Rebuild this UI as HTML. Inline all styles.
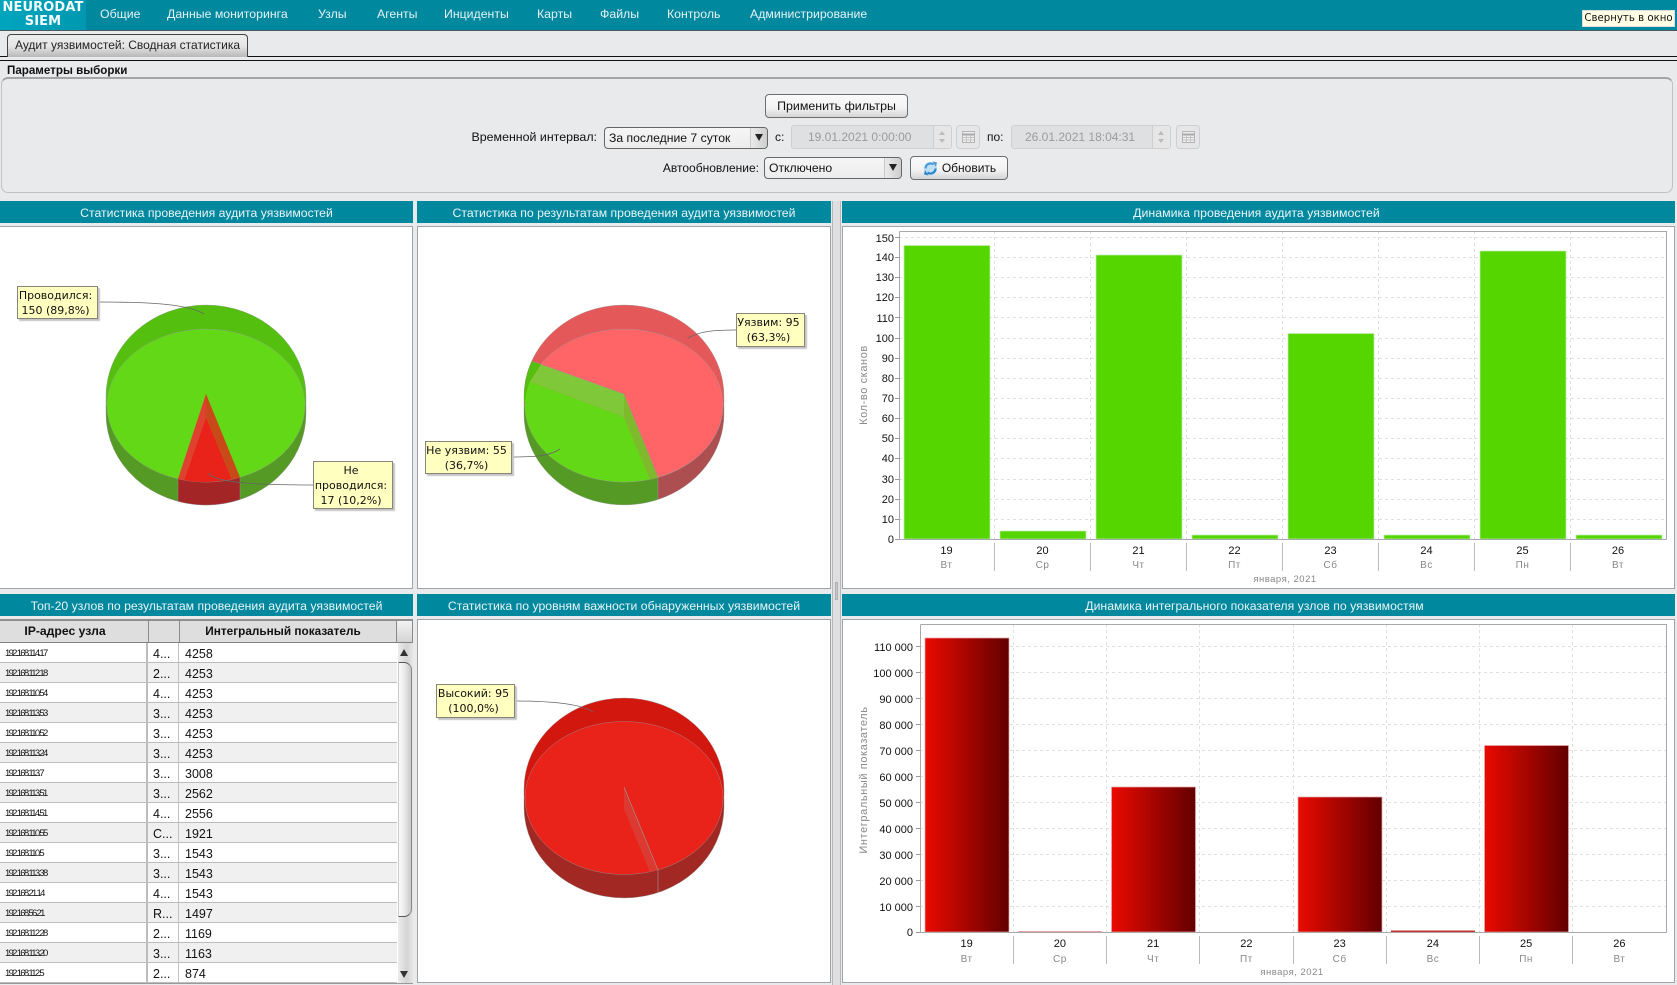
<!DOCTYPE html>
<html lang="ru"><head><meta charset="utf-8"><title>Аудит уязвимостей</title>
<style>
html,body{margin:0;padding:0}
body{width:1677px;height:985px;position:relative;overflow:hidden;background:#e9eaec;font-family:"Liberation Sans",sans-serif;color:#111;font-size:12px}
.a{position:absolute;white-space:nowrap}
.m{position:absolute;top:6px;color:#e6f3f5;font-size:12.3px;line-height:16px;white-space:nowrap}
.hd{position:absolute;height:22px;background:#00889f;color:#eaf5f7;font-size:12.25px;line-height:24px;text-align:center;white-space:nowrap}
.box{position:absolute;background:#fff;border:1px solid #a0a3a8;box-sizing:border-box}
.btn{position:absolute;box-sizing:border-box;border:1px solid #6d6d6d;border-radius:4px;background:linear-gradient(#fafafa,#f2f2f2 60%,#d4d4d4);text-align:center;font-size:12.4px;white-space:nowrap}
.sel{position:absolute;box-sizing:border-box;border:1px solid #666;border-radius:4px;background:linear-gradient(#f6f6f6,#ececec);font-size:12.2px;line-height:20px;padding-left:4px;white-space:nowrap}
.sel i{position:absolute;right:0;top:0;bottom:0;width:16px;border-left:1px solid #c8c8c8;background:linear-gradient(90deg,#ebebeb,#cdcdcd);border-radius:0 3px 3px 0}
.sel i:after{content:"";position:absolute;left:4px;top:6px;border-left:4px solid transparent;border-right:4px solid transparent;border-top:7px solid #222}
.dt{position:absolute;box-sizing:border-box;border:1px solid #cfcfcf;border-radius:3px;background:#dfe0e2;color:#9b9b9b;font-size:12px;line-height:22px;white-space:nowrap;padding-left:16px}
.dt b{position:absolute;right:0;top:0;bottom:0;width:17px;border-left:1px solid #cfcfcf;background:#e6e6e6}
.dt b:before{content:"";position:absolute;left:5px;top:5px;border-left:3px solid transparent;border-right:3px solid transparent;border-bottom:4px solid #bbb}
.dt b:after{content:"";position:absolute;left:5px;bottom:5px;border-left:3px solid transparent;border-right:3px solid transparent;border-top:4px solid #bbb}
.cal{position:absolute;box-sizing:border-box;border:1px solid #cfcfcf;border-radius:4px;background:#e6e6e8;top:125px;width:24px;height:24px}
.cal svg{position:absolute;left:5px;top:5px}
.tip{position:absolute;box-sizing:border-box;background:#ffffc0;border:1px solid #85857a;box-shadow:2px 2px 1px #c4c4c4;font-family:"DejaVu Sans",sans-serif;font-size:11px;line-height:15px;text-align:center;color:#111;padding:1px 4px 0 0;white-space:nowrap}
table{position:absolute;left:0;top:643px;width:397px;border-collapse:collapse;table-layout:fixed;background:#fff}
td{height:16px;padding:3px 0 0;border-bottom:1px solid #bcbcbc;font-size:12.5px;line-height:16px;overflow:hidden;white-space:nowrap;box-sizing:content-box}
tr:nth-child(even) td{background:#f0f0f0}
td:nth-child(1){width:146px;border-right:2px solid #bdbdbd;font-size:9.5px;letter-spacing:-1.7px}
td:nth-child(1) span{margin-left:5px}
td:nth-child(2){width:25px;padding-left:5px;border-right:1px solid #c4c4c4}
td:nth-child(3){padding-left:6px}
.th{position:absolute;top:619px;height:24px;box-sizing:border-box;background:#dedede;border-bottom:1px solid #808080;border-top:2px solid #8f8f8f;border-right:1px solid #8a8a8a;font-weight:bold;font-size:11.8px;line-height:21px;text-align:center;white-space:nowrap}
svg.main{position:absolute;left:0;top:0}
svg.main text{font-family:"Liberation Sans",sans-serif}
</style></head><body>

<div class="a" style="left:0;top:0;width:1677px;height:30px;background:#00889f;border-bottom:1px solid #4a5a5e"></div>
<div class="a" style="left:0;top:0;width:86px;height:30px;background:linear-gradient(90deg,#00a5bd,#0098b0)"></div>
<div class="a" style="left:0;top:1px;width:86px;text-align:center;color:#f2fafb;font-family:'DejaVu Sans',sans-serif;font-weight:bold;font-size:13px;line-height:14px;letter-spacing:.1px">NEURODAT<br>SIEM</div>
<div class="m" style="left:100px">Общие</div>
<div class="m" style="left:167px">Данные мониторинга</div>
<div class="m" style="left:318px">Узлы</div>
<div class="m" style="left:377px">Агенты</div>
<div class="m" style="left:444px">Инциденты</div>
<div class="m" style="left:537px">Карты</div>
<div class="m" style="left:600px">Файлы</div>
<div class="m" style="left:667px">Контроль</div>
<div class="m" style="left:750px">Администрирование</div>
<div class="a" style="left:1582px;top:10px;width:93px;height:17px;box-sizing:border-box;background:#ffffe6;border:1px solid #ddd;font-family:'DejaVu Sans',sans-serif;font-size:10.2px;line-height:15px;text-align:center;color:#111">Свернуть в окно</div>

<div class="a" style="left:0;top:56px;width:1677px;height:1px;background:#111"></div>
<div class="a" style="left:0;top:60px;width:1677px;height:1px;background:#111"></div>
<div class="a" style="left:7px;top:34px;width:241px;height:23px;box-sizing:border-box;border:1px solid #444;border-bottom:0;border-radius:4px 4px 0 0;background:linear-gradient(#eceded,#e6e6e6 50%,#b8b8b8);text-align:center;line-height:21px;font-size:12px;color:#222">Аудит уязвимостей: Сводная статистика</div>

<div class="a" style="left:7px;top:63px;font-weight:bold;font-size:11.6px;line-height:15px;color:#111">Параметры выборки</div>
<div class="a" style="left:1px;top:77px;width:1672px;height:116px;box-sizing:border-box;border:1px solid #c0c2c5;border-top:2px solid #a2a4a7;border-radius:7px;background:#e9eaec"></div>

<div class="btn" style="left:765px;top:94px;width:143px;height:24px;line-height:22px">Применить фильтры</div>
<div class="a" style="left:447px;top:130px;line-height:15px;width:150px;text-align:right;font-size:12.4px">Временной интервал:</div>
<div class="sel" style="left:604px;top:127px;width:164px;height:22px">За последние 7 суток<i></i></div>
<div class="a" style="left:775px;top:130px;line-height:15px">с:</div>
<div class="dt" style="left:791px;top:125px;width:161px;height:24px">19.01.2021 0:00:00<b></b></div>
<div class="cal" style="left:956px"><svg width="13" height="12"><rect x=".5" y=".5" width="12" height="11" fill="#eee" stroke="#b4b4b4"/><path d="M1 3.500h11" stroke="#a8a8a8" stroke-width="2"/><path d="M1 6.500h11M1 9h11M4.500 4v7M8.500 4v7" stroke="#c4c4c4"/></svg></div>
<div class="a" style="left:987px;top:130px;line-height:15px">по:</div>
<div class="dt" style="left:1011px;top:125px;width:160px;height:24px;padding-left:13px">26.01.2021 18:04:31<b></b></div>
<div class="cal" style="left:1176px"><svg width="13" height="12"><rect x=".5" y=".5" width="12" height="11" fill="#eee" stroke="#b4b4b4"/><path d="M1 3.500h11" stroke="#a8a8a8" stroke-width="2"/><path d="M1 6.500h11M1 9h11M4.500 4v7M8.500 4v7" stroke="#c4c4c4"/></svg></div>
<div class="a" style="left:640px;top:161px;width:119px;text-align:right;line-height:15px;font-size:12px">Автообновление:</div>
<div class="sel" style="left:764px;top:157px;width:138px;height:22px">Отключено<i></i></div>
<div class="btn" style="left:910px;top:156px;width:98px;height:24px;line-height:22px;padding-left:20px;font-size:12px">Обновить
<svg style="position:absolute;left:12px;top:4px" width="15" height="15" viewBox="0 0 15 15"><circle cx="7.500" cy="7.500" r="6.500" fill="#bfe0f4"/><path d="M2.500 7.500A5 5 0 0 1 10.500 3.500" fill="none" stroke="#4a9ad8" stroke-width="2.200"/><path d="M9.500 .5l4.500 1-1 4.500z" fill="#4a9ad8"/><path d="M12.500 7.500A5 5 0 0 1 4.500 11.500" fill="none" stroke="#2f86cc" stroke-width="2.200"/><path d="M5.500 14.500l-4.500-1 1-4.500z" fill="#2f86cc"/></svg></div>

<!-- splitter -->
<div class="a" style="left:832px;top:201px;width:9px;height:784px;background:#dfdfe1;border-left:1px solid #b8b8b8;border-right:1px solid #b8b8b8;box-sizing:border-box"></div>
<div class="a" style="left:835px;top:582px;width:3px;height:18px;background:#c8c8c8;border:1px solid #b0b0b0;box-sizing:border-box"></div>

<!-- headers -->
<div class="hd" style="left:0;top:201px;width:413px">Статистика проведения аудита уязвимостей</div>
<div class="hd" style="left:417px;top:201px;width:414px">Статистика по результатам проведения аудита уязвимостей</div>
<div class="hd" style="left:842px;top:201px;width:829px;padding-right:4px;font-size:12.35px">Динамика проведения аудита уязвимостей</div>
<div class="hd" style="left:0;top:594px;width:413px">Топ-20 узлов по результатам проведения аудита уязвимостей</div>
<div class="hd" style="left:417px;top:594px;width:414px">Статистика по уровням важности обнаруженных уязвимостей</div>
<div class="hd" style="left:842px;top:594px;width:825px;padding-right:8px">Динамика интегрального показателя узлов по уязвимостям</div>

<!-- boxes -->
<div class="box" style="left:-1px;top:226px;width:414px;height:363px"></div>
<div class="box" style="left:417px;top:226px;width:414px;height:363px"></div>
<div class="box" style="left:842px;top:226px;width:833px;height:363px"></div>
<div class="box" style="left:417px;top:619px;width:414px;height:364px"></div>
<div class="box" style="left:842px;top:619px;width:833px;height:364px"></div>

<!-- table -->
<div class="a" style="left:-1px;top:619px;width:414px;height:365px;background:#fff;border:1px solid #9a9a9a;box-sizing:border-box"></div>
<div class="th" style="left:-18px;width:167px;font-size:12.2px">IP-адрес узла</div>
<div class="th" style="left:149px;width:31px"></div>
<div class="th" style="left:180px;width:217px;padding-right:10px">Интегральный показатель</div>
<div class="th" style="left:397px;width:16px;background:linear-gradient(#f2f2f2,#d4d4d4)"></div>
<table><tbody>
<tr><td><span>192.168.114.17</span></td><td>4...</td><td>4258</td></tr>
<tr><td><span>192.168.112.18</span></td><td>2...</td><td>4253</td></tr>
<tr><td><span>192.168.110.54</span></td><td>4...</td><td>4253</td></tr>
<tr><td><span>192.168.113.53</span></td><td>3...</td><td>4253</td></tr>
<tr><td><span>192.168.110.52</span></td><td>3...</td><td>4253</td></tr>
<tr><td><span>192.168.113.24</span></td><td>3...</td><td>4253</td></tr>
<tr><td><span>192.168.113.7</span></td><td>3...</td><td>3008</td></tr>
<tr><td><span>192.168.113.51</span></td><td>3...</td><td>2562</td></tr>
<tr><td><span>192.168.114.51</span></td><td>4...</td><td>2556</td></tr>
<tr><td><span>192.168.110.55</span></td><td>C...</td><td>1921</td></tr>
<tr><td><span>192.168.110.5</span></td><td>3...</td><td>1543</td></tr>
<tr><td><span>192.168.113.38</span></td><td>3...</td><td>1543</td></tr>
<tr><td><span>192.168.21.14</span></td><td>4...</td><td>1543</td></tr>
<tr><td><span>192.168.56.21</span></td><td>R...</td><td>1497</td></tr>
<tr><td><span>192.168.112.28</span></td><td>2...</td><td>1169</td></tr>
<tr><td><span>192.168.113.20</span></td><td>3...</td><td>1163</td></tr>
<tr><td><span>192.168.112.5</span></td><td>2...</td><td>874</td></tr>
</tbody></table>
<div class="a" style="left:398px;top:643px;width:15px;height:340px;background:linear-gradient(90deg,#ececec,#d4d4d4 60%,#e6e6e6)"></div>
<div class="a" style="left:398px;top:662px;width:14px;height:255px;box-sizing:border-box;border:1px solid transparent;border-top-color:#555;border-bottom-color:#555;border-right-color:#888;border-radius:0 8px 8px 0;background:linear-gradient(90deg,#fafafa,#e8e8e8 50%,#c8c8c8)"></div>
<div class="a" style="left:400px;top:649px;border-left:4px solid transparent;border-right:4px solid transparent;border-bottom:7px solid #333"></div>
<div class="a" style="left:400px;top:971px;border-left:4px solid transparent;border-right:4px solid transparent;border-top:7px solid #333"></div>

<svg class="main" width="1677" height="985" viewBox="0 0 1677 985">
<defs><linearGradient id="rg" x1="0" x2="1" y1="0" y2="0"><stop offset="0" stop-color="#ea0a00"/><stop offset="1" stop-color="#620000"/></linearGradient></defs>

<!-- pie 1 -->
<g stroke="#999" stroke-width=".4">
<path d="M106 405V396A100 91 0 0 1 306 396V405Z" fill="#55bf10"/>
<path d="M106 405V414A100 91 0 0 0 306 414V405Z" fill="#549a24"/>
<ellipse cx="206" cy="405.500" rx="99" ry="76.500" fill="#63d816"/>
<path d="M178 478.900A99 76.500 0 0 0 240 477.400V499.500A100 91 0 0 1 178 501.400Z" fill="#a32525"/>
</g>
<path d="M206 417L184 480.100A99 76.500 0 0 0 232 479.300Z" fill="#e9231a"/>
<path d="M206 394L178 478.900A99 76.500 0 0 0 184 480.100L206 417Z" fill="#e04030"/>
<path d="M206 394L240 477.400A99 76.500 0 0 1 232 479.300L206 417Z" fill="#c84a18"/>
<path d="M99 302C140 302 187 303 204 314" fill="none" stroke="#666" stroke-width=".8"/>
<path d="M313 485C270 485 215 484 208 473" fill="none" stroke="#666" stroke-width=".8"/>

<!-- pie 2 -->
<g stroke="#999" stroke-width=".4">
<path d="M524 405V396A100 91 0 0 1 724 396V405Z" fill="#e5585a"/>
<path d="M524 405V414A100 91 0 0 0 658 499.500V477.400A99 76.500 0 0 1 525 405.500Z" fill="#549a24"/>
<path d="M724 405V414A100 91 0 0 1 658 499.500V477.400A99 76.500 0 0 0 723 405.500Z" fill="#ad4f50"/>
<ellipse cx="624" cy="405.500" rx="99" ry="76.500" fill="#ff6466"/>
</g>
<path d="M532 361A100 91 0 0 0 524 396V405L530 381.500L541 364.500Z" fill="#55bf10"/>
<path d="M624 417L530 381.500A99 76.500 0 0 0 650 479.300Z" fill="#63d816"/>
<path d="M541 364.500L624 394V417L530 381.500Z" fill="#7ec83a"/>
<path d="M624 394L658 477.400A99 76.500 0 0 1 650 479.300L624 417Z" fill="#7fb92c"/>
<path d="M532 361L624 394L658 477" fill="none" stroke="#999" stroke-width=".4"/>
<path d="M736 330C715 330 700 331 688 338" fill="none" stroke="#666" stroke-width=".8"/>
<path d="M512 457C535 457 550 456 560 449" fill="none" stroke="#666" stroke-width=".8"/>

<!-- pie 3 -->
<g stroke="#999" stroke-width=".4">
<path d="M524 798V789A100 91 0 0 1 724 789V798Z" fill="#d2170f"/>
<path d="M524 798V807A100 91 0 0 0 724 807V798Z" fill="#a22823"/>
<ellipse cx="624" cy="798" rx="99" ry="76.500" fill="#e9231a"/>
</g>
<path d="M624 787L658 870L650 872L624 809Z" fill="#dc3a30"/>
<path d="M624 787L658 870V892" fill="none" stroke="#999" stroke-width=".6"/>
<path d="M515 701C545 701 580 703 593 712" fill="none" stroke="#666" stroke-width=".8"/>

<!-- chart 1 -->
<path d="M899 519.500H1666M899 499.500H1666M899 479.500H1666M899 458.500H1666M899 438.500H1666M899 418.500H1666M899 398.500H1666M899 378.500H1666M899 358.500H1666M899 338.500H1666M899 317.500H1666M899 297.500H1666M899 277.500H1666M899 257.500H1666M899 237.500H1666M994.500 231V539M1090.500 231V539M1186.500 231V539M1282.500 231V539M1378.500 231V539M1474.500 231V539M1570.500 231V539" stroke="#e0e0e0" stroke-dasharray="3 3" fill="none"/>
<g fill="#55d600" stroke="#c4eeb0" stroke-width=".7">
<rect x="904" y="245.500" width="86" height="293.500"/><rect x="1000" y="531" width="86" height="8"/><rect x="1096" y="255" width="86" height="284"/><rect x="1192" y="535" width="86" height="4"/><rect x="1288" y="333.500" width="86" height="205.500"/><rect x="1384" y="535" width="86" height="4"/><rect x="1480" y="251" width="86" height="288"/><rect x="1576" y="535" width="86" height="4"/>
</g>
<path d="M899.500 231.500H1666.500V539.500M899.500 231.500V539.500H1666.500" fill="none" stroke="#a8a8a8" stroke-width="1"/>
<path d="M895 539.500h4M895 519.500h4M895 499.500h4M895 479.500h4M895 458.500h4M895 438.500h4M895 418.500h4M895 398.500h4M895 378.500h4M895 358.500h4M895 338.500h4M895 317.500h4M895 297.500h4M895 277.500h4M895 257.500h4M895 237.500h4" stroke="#999"/>
<path d="M994.500 543V571M1090.500 543V571M1186.500 543V571M1282.500 543V571M1378.500 543V571M1474.500 543V571M1570.500 543V571" stroke="#bbb"/>
<g font-size="11" fill="#111" text-anchor="end">
<text x="894" y="543">0</text><text x="894" y="523">10</text><text x="894" y="503">20</text><text x="894" y="483">30</text><text x="894" y="462">40</text><text x="894" y="442">50</text><text x="894" y="422">60</text><text x="894" y="402">70</text><text x="894" y="382">80</text><text x="894" y="362">90</text><text x="894" y="342">100</text><text x="894" y="322">110</text><text x="894" y="301">120</text><text x="894" y="281">130</text><text x="894" y="261">140</text><text x="894" y="242">150</text>
</g>
<g font-size="11" fill="#111" text-anchor="middle">
<text x="946.500" y="554">19</text><text x="1042.500" y="554">20</text><text x="1138.500" y="554">21</text><text x="1234.500" y="554">22</text><text x="1330.500" y="554">23</text><text x="1426.500" y="554">24</text><text x="1522.500" y="554">25</text><text x="1618" y="554">26</text>
</g>
<g font-size="10" fill="#888" text-anchor="middle" letter-spacing=".5">
<text x="946.500" y="568">Вт</text><text x="1042.500" y="568">Ср</text><text x="1138.500" y="568">Чт</text><text x="1234.500" y="568">Пт</text><text x="1330.500" y="568">Сб</text><text x="1426.500" y="568">Вс</text><text x="1522.500" y="568">Пн</text><text x="1618" y="568">Вт</text>
<text x="1285" y="582" font-size="9.500">января, 2021</text>
</g>
<text transform="translate(867 385) rotate(-90)" font-size="11" fill="#8a8a8a" text-anchor="middle" letter-spacing=".6">Кол-во сканов</text>

<!-- chart 2 -->
<path d="M920 906.500H1666M920 880.500H1666M920 854.500H1666M920 828.500H1666M920 802.500H1666M920 776.500H1666M920 750.500H1666M920 724.500H1666M920 698.500H1666M920 672.500H1666M920 646.500H1666M1013.500 624V932M1106.500 624V932M1199.500 624V932M1293.500 624V932M1386.500 624V932M1479.500 624V932M1572.500 624V932" stroke="#e0e0e0" stroke-dasharray="3 3" fill="none"/>
<g fill="url(#rg)" stroke="#eaa8a8" stroke-width=".7">
<rect x="925" y="638" width="84" height="294"/><rect x="1111.500" y="787" width="84" height="145"/><rect x="1298" y="797" width="84" height="135"/><rect x="1484.500" y="745.500" width="84" height="186.500"/>
</g>
<rect x="1018" y="931" width="84" height="1" fill="#eaa0a0"/>
<rect x="1391" y="930.500" width="84" height="1.500" fill="#c83030"/>
<path d="M920.500 624.500H1666.500V932.500M920.500 624.500V932.500H1666.500" fill="none" stroke="#a8a8a8" stroke-width="1"/>
<path d="M916 932.500h4M916 906.500h4M916 880.500h4M916 854.500h4M916 828.500h4M916 802.500h4M916 776.500h4M916 750.500h4M916 724.500h4M916 698.500h4M916 672.500h4M916 646.500h4" stroke="#999"/>
<path d="M1013.500 936V964M1106.500 936V964M1199.500 936V964M1293.500 936V964M1386.500 936V964M1479.500 936V964M1572.500 936V964" stroke="#bbb"/>
<g font-size="11" fill="#111" text-anchor="end">
<text x="913" y="936">0</text><text x="913" y="911">10 000</text><text x="913" y="885">20 000</text><text x="913" y="859">30 000</text><text x="913" y="833">40 000</text><text x="913" y="807">50 000</text><text x="913" y="781">60 000</text><text x="913" y="755">70 000</text><text x="913" y="729">80 000</text><text x="913" y="703">90 000</text><text x="913" y="677">100 000</text><text x="913" y="651">110 000</text>
</g>
<g font-size="11" fill="#111" text-anchor="middle">
<text x="966.600" y="947">19</text><text x="1059.900" y="947">20</text><text x="1153.100" y="947">21</text><text x="1246.400" y="947">22</text><text x="1339.600" y="947">23</text><text x="1432.900" y="947">24</text><text x="1526.100" y="947">25</text><text x="1619.400" y="947">26</text>
</g>
<g font-size="10" fill="#888" text-anchor="middle" letter-spacing=".5">
<text x="966.600" y="962">Вт</text><text x="1059.900" y="962">Ср</text><text x="1153.100" y="962">Чт</text><text x="1246.400" y="962">Пт</text><text x="1339.600" y="962">Сб</text><text x="1432.900" y="962">Вс</text><text x="1526.100" y="962">Пн</text><text x="1619.400" y="962">Вт</text>
<text x="1292" y="975" font-size="9.500">января, 2021</text>
</g>
<text transform="translate(867 780) rotate(-90)" font-size="11" fill="#8a8a8a" text-anchor="middle" letter-spacing=".6">Интегральный показатель</text>
</svg>

<!-- tooltips -->
<div class="tip" style="left:17px;top:286px;width:81px;height:33px">Проводился:<br>150 (89,8%)</div>
<div class="tip" style="left:313px;top:461px;width:80px;height:48px">Не<br>проводился:<br>17 (10,2%)</div>
<div class="tip" style="left:736px;top:313px;width:69px;height:34px">Уязвим: 95<br>(63,3%)</div>
<div class="tip" style="left:425px;top:441px;width:87px;height:33px">Не уязвим: 55<br>(36,7%)</div>
<div class="tip" style="left:436px;top:684px;width:79px;height:34px">Высокий: 95<br>(100,0%)</div>
</body></html>
